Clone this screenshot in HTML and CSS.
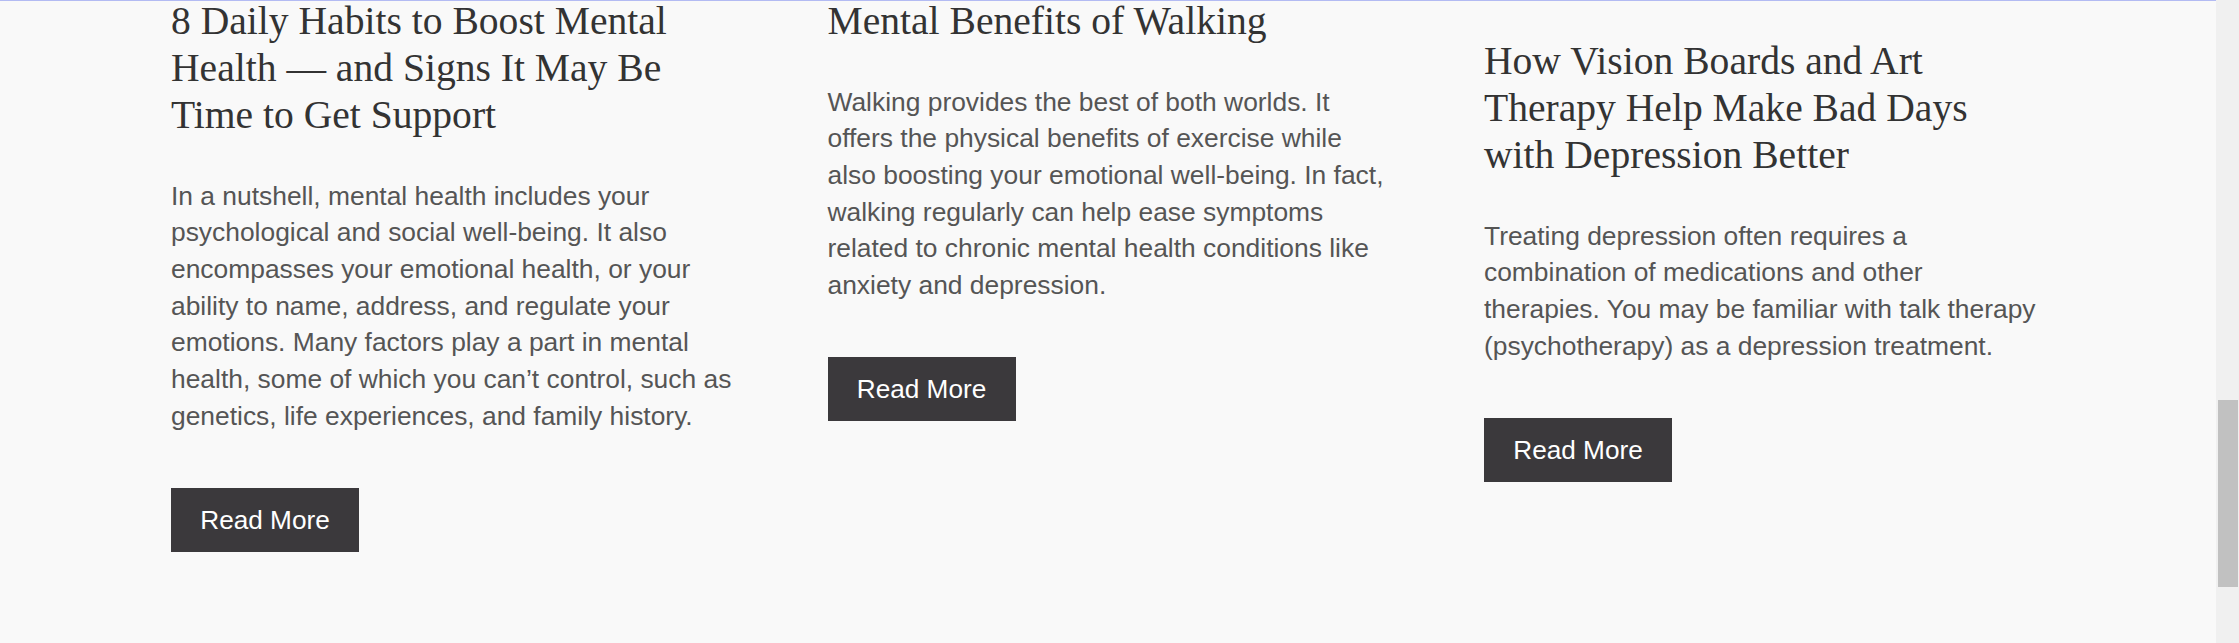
FILE: index.html
```html
<!DOCTYPE html>
<html lang="en">
<head>
<meta charset="utf-8">
<title>Posts</title>
<link rel="stylesheet" href="styles.css">
</head>
<body>
<div class="page">
  <main class="main">
    <div class="topline"></div>
    <section class="posts">
      <article class="post">
        <h2 class="post-title">8 Daily Habits to Boost Mental Health — and Signs It May Be Time to Get Support</h2>
        <p class="post-excerpt">In a nutshell, mental health includes your psychological and social well-being. It also encompasses your emotional health, or your ability to name, address, and regulate your emotions. Many factors play a part in mental health, some of which you can’t control, such as genetics, life experiences, and family history.</p>
        <a class="read-more" href="#">Read More</a>
      </article>
      <article class="post">
        <h2 class="post-title">Mental Benefits of Walking</h2>
        <p class="post-excerpt">Walking provides the best of both worlds. It offers the physical benefits of exercise while also boosting your emotional well-being. In fact, walking regularly can help ease symptoms related to chronic mental health conditions like anxiety and depression.</p>
        <a class="read-more" href="#">Read More</a>
      </article>
      <article class="post post-offset">
        <h2 class="post-title">How Vision Boards and Art Therapy Help Make Bad Days with Depression Better</h2>
        <p class="post-excerpt">Treating depression often requires a combination of medications and other therapies. You may be familiar with talk therapy (psychotherapy) as a depression treatment.</p>
        <a class="read-more" href="#">Read More</a>
      </article>
    </section>
  </main>
  <div class="scrollbar"><div class="scrollbar-thumb"></div></div>
</div>
</body>
</html>
```

FILE: styles.css
```css
html, body {
  margin: 0;
  padding: 0;
  background: #f9f9f9;
}

.page {
  display: flex;
  height: 643px;
  overflow: hidden;
}

.main {
  flex: 1;
  min-width: 0;
  background: #f9f9f9;
}

.topline {
  height: 1px;
  background: #b3bbf3;
  position: relative;
  z-index: 1;
}

.posts {
  display: flex;
  align-items: flex-start;
  gap: 95.5px;
  padding-left: 171px;
  margin-top: -3px;
}

.post {
  flex: none;
  width: 561px;
  display: flex;
  flex-direction: column;
  align-items: flex-start;
}

.post-offset {
  padding-top: 40px;
}

.post-title {
  margin: 0 0 38.5px;
  font-family: "Liberation Serif", "Times New Roman", serif;
  font-weight: 400;
  font-size: 39.6px;
  line-height: 47px;
  color: #333333;
}

.post-excerpt {
  margin: 0 0 53.5px;
  font-family: "Liberation Sans", Arial, sans-serif;
  font-size: 26.4px;
  line-height: 36.67px;
  color: #555555;
}

.read-more {
  display: inline-block;
  box-sizing: border-box;
  width: 188px;
  height: 64px;
  padding: 18px 0;
  text-align: center;
  font-family: "Liberation Sans", Arial, sans-serif;
  font-size: 26.2px;
  line-height: 28px;
  color: #ffffff;
  background: #3b393c;
  text-decoration: none;
}

.scrollbar {
  flex: none;
  width: 23px;
  background: #f0f0f0;
}

.scrollbar-thumb {
  margin: 400px 1px 0 2px;
  height: 187px;
  background: #c1c1c1;
}
```
